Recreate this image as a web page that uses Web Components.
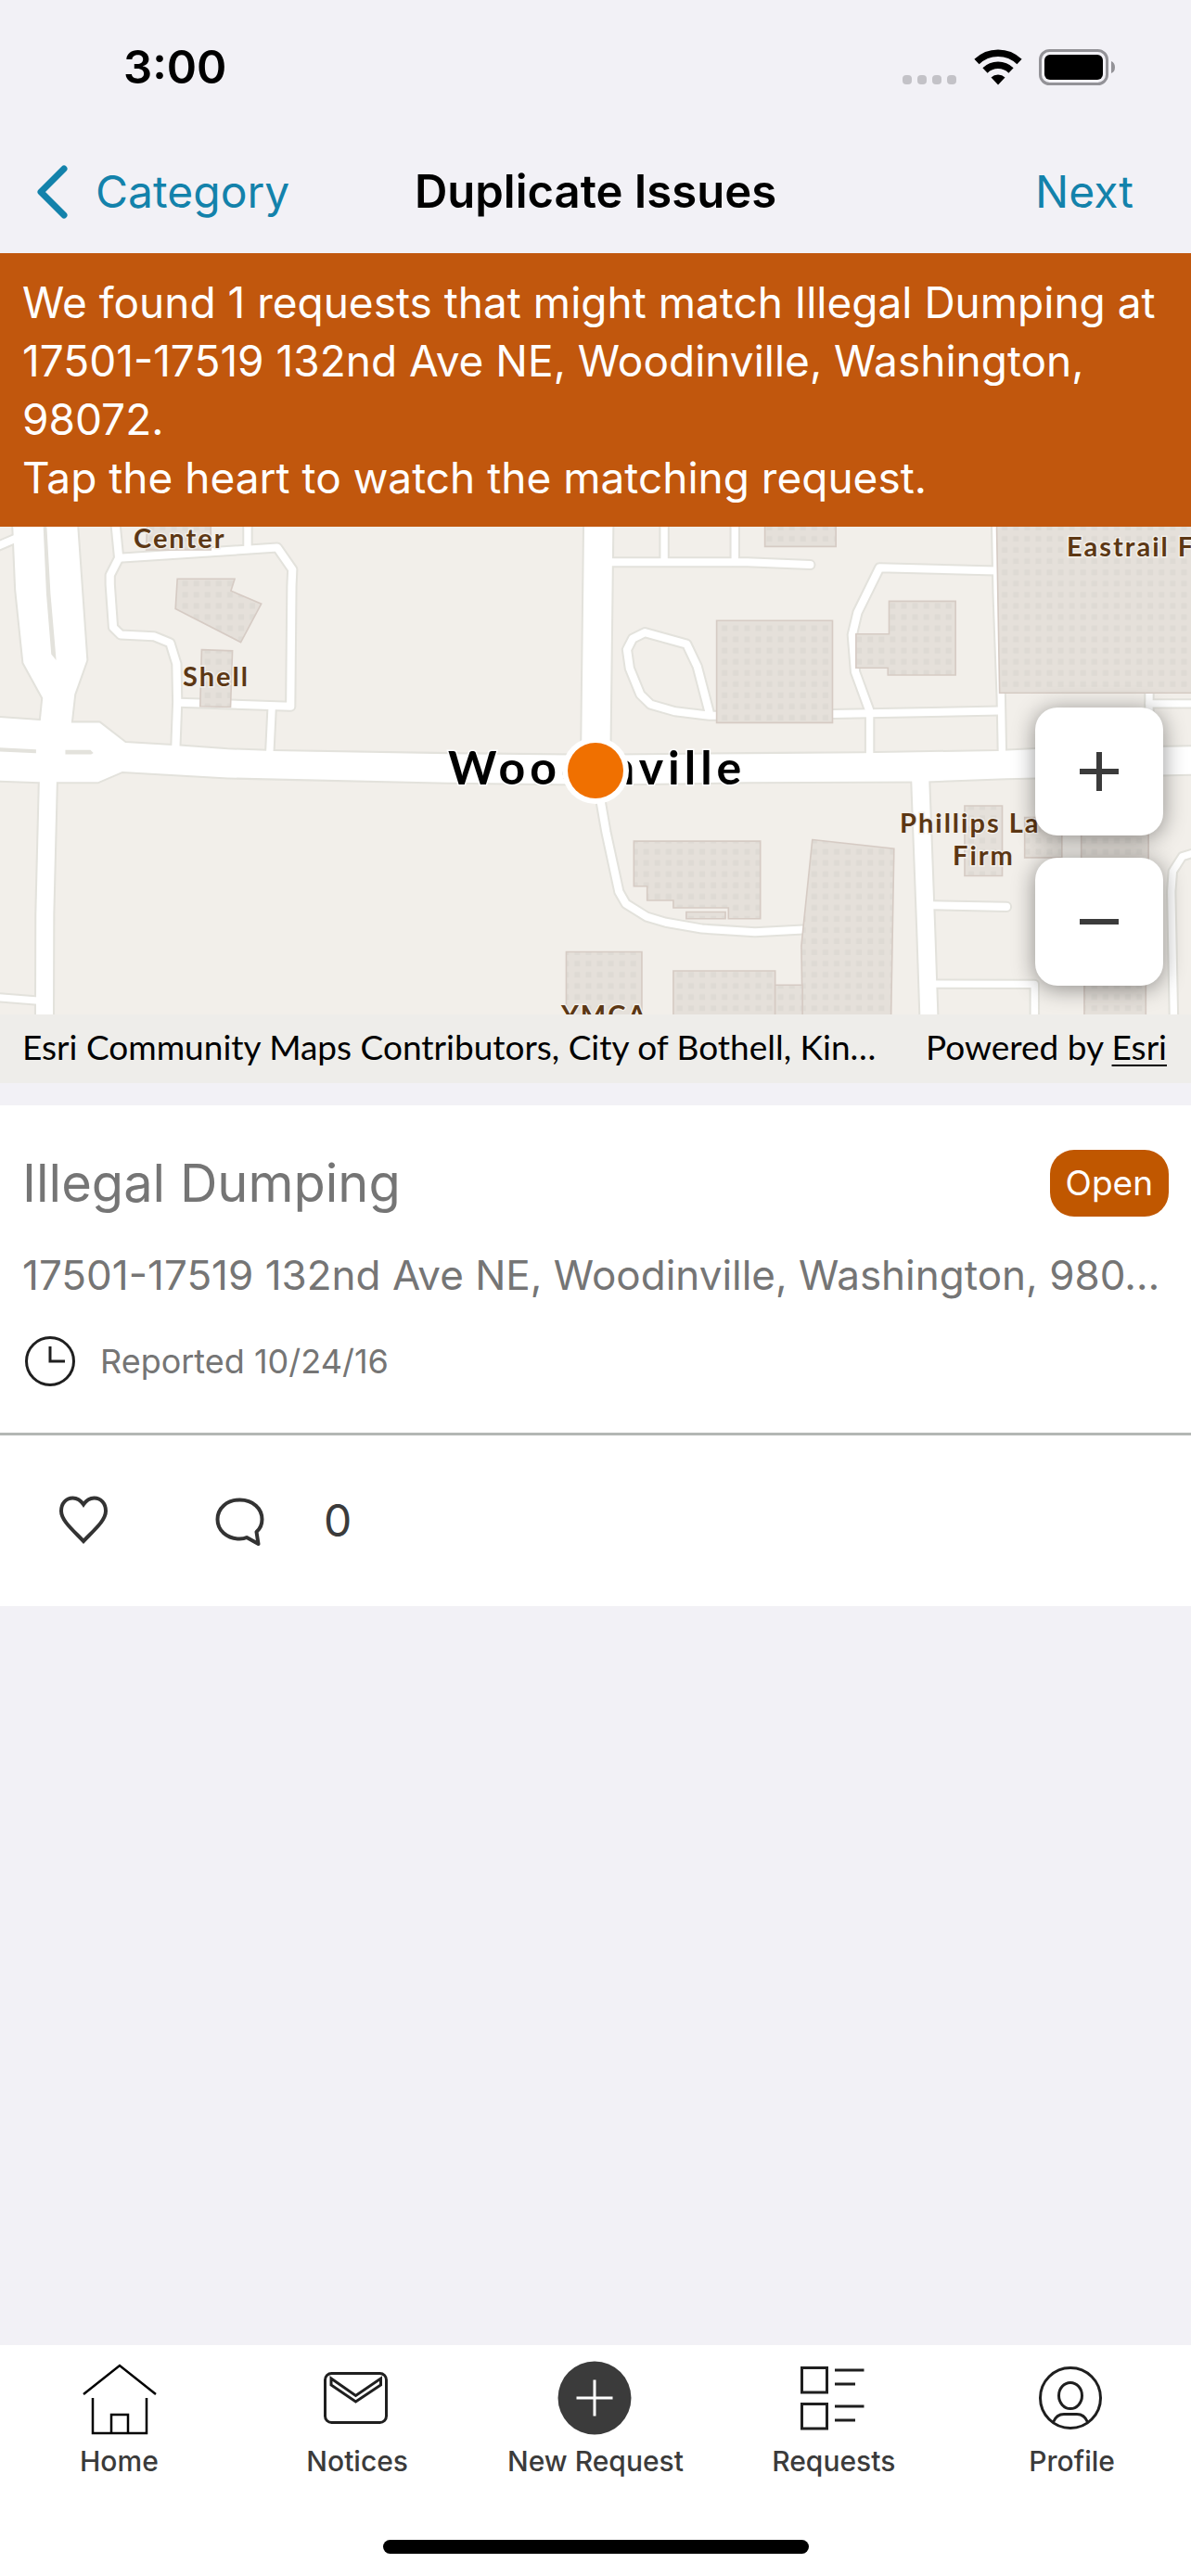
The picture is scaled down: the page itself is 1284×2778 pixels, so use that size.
<!DOCTYPE html>
<html lang="en">
<head>
<meta charset="utf-8">
<meta name="viewport" content="width=device-width, initial-scale=1">
<title>Duplicate Issues</title>
<style>
  html, body { margin: 0; height: 100%; background: #f2f1f6; }
  body { font-family: Inter, "Liberation Sans", sans-serif; color: #3b3b3b; }
</style>
</head>
<body>
<issues-app></issues-app>
<script>
const define = (name, html) => {
  const tpl = document.createElement('template');
  tpl.innerHTML = html;
  customElements.define(name, class extends HTMLElement {
    constructor() {
      super();
      this.attachShadow({ mode: 'open' }).append(tpl.content.cloneNode(true));
    }
  });
};

define('status-bar', `
<style>
  :host { display: flex; justify-content: space-between; align-items: center; height: 146px; padding: 0 80px 0 133px; color: #000; }
  time { font-size: 49px; line-height: 60px; font-weight: 600; }
  svg { display: block; width: 232px; height: 40px; }
</style>
<time>3:00</time>
<svg viewBox="0 0 232 40" aria-hidden="true">
  <g fill="#c3c2c7"><rect x="1" y="28" width="10" height="10" rx="4"/><rect x="17" y="28" width="10" height="10" rx="4"/><rect x="33" y="28" width="10" height="10" rx="4"/><rect x="49" y="28" width="10" height="10" rx="4"/></g>
  <g fill="none" stroke="#000" stroke-width="7.5"><path d="M81 13.5a33 33 0 0 1 46 0"/><path d="M90 23a20 20 0 0 1 28 0"/></g>
  <path d="M96.500 30.500a11 11 0 0 1 15 0L104 38.500z"/>
  <rect x="149.500" y="1.500" width="72" height="36" rx="10" fill="none" stroke="#939297" stroke-width="3"/>
  <rect x="154" y="6" width="63" height="27" rx="6"/>
  <path d="M226 13q4 1.500 4 6.500t-4 6.500z" fill="#939297"/>
</svg>`);

define('nav-bar', `
<style>
  :host { display: grid; grid-template-columns: 1fr auto 1fr; align-items: center; height: 127px; padding: 0 36px 5px; box-sizing: border-box; font-size: 48px; line-height: 60px; }
  button { font: inherit; color: #1382ab; background: none; border: 0; padding: 0; display: flex; align-items: center; gap: 30px; justify-self: start; }
  .next { justify-self: end; padding-right: 26px; }
  h1 { margin: 0; font-size: 49px; line-height: 60px; font-weight: 600; color: #000; }
  svg { display: block; width: 37px; height: 60px; }
</style>
<button class="back" type="button"><svg viewBox="0 0 37 60" aria-hidden="true"><path d="M33 5 8 30l25 25" fill="none" stroke="#1382ab" stroke-width="7" stroke-linecap="round" stroke-linejoin="round"/></svg><slot name="back"></slot></button>
<h1><slot></slot></h1>
<button class="next" type="button"><slot name="next"></slot></button>`);

define('match-banner', `
<style>
  :host { display: block; background: #c1570d; color: #fff; padding: 22px 24px 21px; font-size: 46px; line-height: 63px; }
  ::slotted(p) { margin: 0; }
</style>
<slot></slot>`);

// Basemap geometry. Two tiles side by side, each 1568 units across.
const T = 1568;
const mapRoads = [
  // [tile offset, width, path]
  [0, 20, 'M-10 74 40 52'],
  [0, 20, 'M303 0 313 104 290 150V175L298 290 318 310 405 314 448 332 465 388 467 490 462 625'],
  [0, 20, 'M313 104 730 76 770 135 768 180 765 502 470 492'],
  [0, 18, 'M652 0V76'],
  [0, 18, 'M716 505 710 630'],
  [0, 44, 'M127 690 118 1060 117 1400'],
  [0, 18, 'M-10 1283 100 1292'],
  [0, 74, 'M1576 0 1568 680'],
  [T, 20, 'M0 115H400L565 122'],
  [T, 18, 'M181 0V112'],
  [T, 18, 'M367 0V112'],
  [T, 20, 'M1055 138 748 130 690 250 676 310 684 410 720 510'],
  [T, 18, 'M1054 0 1058 200 1068 480 1071 640'],
  [T, 20, 'M300 520 268 395 240 335 130 304 98 320 83 350 90 400 118 470 145 497 210 516 300 527H400L720 521 1065 514'],
  [T, 18, 'M722 515V640'],
  [T, 44, 'M855 690 870 1100 880 1400'],
  [T, 20, 'M880 1036 1082 1040'],
  [T, 18, 'M890 1247 1156 1248V1400'],
  [T, 20, 'M4 700 28 840 62 1000 80 1032 135 1067 185 1082 280 1099 420 1108 570 1100'],
  [T, 18, 'M1458 460V640'],
  [T, 18, 'M1458 495H1600'],
  [T, 18, 'M1600 888 1545 905 1520 945 1516 1000 1524 1400'],
];
const mapAreas = [
  'M34 0 42 190 62 385 113 480 105 560H186L196 470 228 378 202 0Z',
  'M-10 532 105 540 186 546 262 546 330 600 465 608 600 618 720 622 1180 630 1568 634 1970 630 2270 628 2628 622 2728 617 3160 610V683L2648 695 2440 703 1968 705 1568 711 1180 706 600 693 322 677 258 705H103L-10 701Z',
];
const mapBuildings = [
  [0, 'M388 0H555V82H385Z'],
  [0, 'M467 160H618L608 192 688 227 634 330 462 240Z'],
  [0, 'M531 350 612 353 607 504 527 502Z'],
  [0, 'M1491 1161H1690V1400H1491Z'],
  [T, 'M446 0H633V73H446Z'],
  [T, 'M319 272H624V546H319Z'],
  [T, 'M773 220H948V418H770V399H686V308H773Z'],
  [T, 'M1056 0H1600V466H1064Z'],
  [T, 'M101 864H434V1072H350V1043H205V1023H136V985H101Z'],
  [T, 'M239 1054H342V1072H239Z'],
  [T, 'M571 860 786 884 777 1400H546L542 1145Z'],
  [T, 'M205 1212H473V1400H205Z'],
  [T, 'M473 1250H545V1400H473Z'],
  [T, 'M972 769H1071V957H972Z'],
  [T, 'M1130 800H1228V908H1130Z'],
  [T, 'M1279 800H1456V960H1279Z'],
  [T, 'M1287 1200H1449V1400H1287Z'],
];
const stroke = (extra, colour) => mapRoads.map(([x, w, d]) =>
  `<path transform="translate(${x})" d="${d}" stroke="${colour}" stroke-width="${w + extra}"/>`).join('');

define('zoom-control', `
<style>
  :host { display: flex; flex-direction: column; gap: 24px; }
  button { width: 138px; height: 138px; padding: 0; border: 0; border-radius: 24px; background: #fff; box-shadow: 0 3px 24px rgba(0,0,0,.42); display: grid; place-items: center; }
  svg { display: block; width: 42px; height: 42px; }
</style>
<button type="button" aria-label="Zoom in"><svg viewBox="0 0 42 42"><path d="M0 21H42M21 0V42" stroke="#3b3b3b" stroke-width="6"/></svg></button>
<button type="button" aria-label="Zoom out"><svg viewBox="0 0 42 42"><path d="M0 21H42" stroke="#3b3b3b" stroke-width="6"/></svg></button>`);

define('issue-map', `
<style>
  :host { display: grid; grid-template-rows: 526px 74px; position: relative; overflow: hidden; background: #f2efea; }
  .canvas { display: block; width: 100%; height: 526px; }
  .label { font-family: Lato, "Open Sans", sans-serif; font-weight: 700; font-size: 29px; letter-spacing: 2px; fill: #5c3714; stroke: #f2efea; stroke-width: 3px; paint-order: stroke; }
  .city { font-size: 50px; letter-spacing: 5px; fill: #000; stroke: #fff; }
  zoom-control { position: absolute; right: 30px; top: 195px; }
  footer { display: flex; justify-content: space-between; align-items: center; padding: 0 26px 4px 24px; background: #eeedea; color: #000; font-family: Lato, "Open Sans", sans-serif; font-size: 37px; line-height: 44px; white-space: nowrap; position: relative; }
  a { color: inherit; text-decoration-thickness: 2px; text-underline-offset: 5px; }
</style>
<svg class="canvas" viewBox="0 0 1284 526" preserveAspectRatio="xMidYMin slice" role="img" aria-label="Map">
  <defs><pattern id="dots" width="29.500" height="30" patternUnits="userSpaceOnUse"><rect x="8" y="15" width="15" height="15" fill="#dedad4"/></pattern></defs>
  <g transform="translate(0 -8) scale(.40944 .40179)">
    <rect x="0" y="0" width="3136" height="1400" fill="#f2efea"/>
    <g fill="none" stroke-linejoin="round" stroke-linecap="round">
      ${stroke(10, '#e3e2dc')}
      ${mapAreas.map(d => `<path d="${d}" stroke="#e3e2dc" stroke-width="10"/>`).join('')}
      ${mapAreas.map(d => `<path d="${d}" fill="#fff"/>`).join('')}
      ${stroke(0, '#fff')}
    </g>
    <g fill="#e3e2dc"><path d="M113 0H122L133 200 144 330 148 378 135 362 122 200Z"/><path d="M-10 612 95 618V628L-10 623Z"/><path d="M172 619H238L246 627 240 631H172Z"/></g>
    ${mapBuildings.map(([x, d]) => `<g transform="translate(${x})"><path d="${d}" fill="#e5e0da"/><path d="${d}" fill="url(#dots)" stroke="#d6cbc4" stroke-width="4"/></g>`).join('')}
  </g>
  <text class="label" x="144" y="23">Center</text>
  <text class="label" x="197" y="172">Shell</text>
  <text class="label" x="1150" y="32">Eastrail F</text>
  <text class="label" x="970" y="330">Phillips La</text>
  <text class="label" x="1027" y="365">Firm</text>
  <text class="label" x="605" y="537">YMCA</text>
  <text class="label city" x="483" y="278">Woodinville</text>
  <circle cx="642" cy="263" r="36" fill="#fff"/><circle cx="642" cy="263" r="30" fill="#f07000"/>
</svg>
<footer><span>Esri Community Maps Contributors, City of Bothell, Kin…</span><span>Powered by <a href="#esri">Esri</a></span></footer>
<zoom-control></zoom-control>`);

define('issue-card', `
<style>
  :host { display: block; background: #fff; margin-top: 24px; color: #757575; }
  .info { display: flex; flex-direction: column; padding: 48px 24px 47px; gap: 23px; border-bottom: 3px solid #b3b7b4; }
  .head { display: flex; justify-content: space-between; align-items: center; height: 72px; }
  h2 { margin: 0; font-size: 56px; line-height: 72px; font-weight: 400; }
  .badge { background: #c05700; color: #fff; font-size: 37px; line-height: 72px; border-radius: 26px; padding: 0 17px; }
  p { margin: 0; font-size: 44px; line-height: 80px; white-space: nowrap; }
  .meta { display: flex; align-items: center; gap: 24px; font-size: 36px; line-height: 54px; }
  .clock { width: 60px; height: 60px; }
  .actions { display: flex; align-items: center; height: 184px; padding: 0 62px; gap: 112px; }
  button { display: flex; align-items: center; gap: 63px; padding: 0; border: 0; background: none; color: #3b3b3b; font: inherit; font-size: 48px; line-height: 60px; }
  svg { display: block; width: 56px; height: 56px; }
</style>
<div class="info">
  <div class="head"><h2><slot name="title"></slot></h2><span class="badge"><slot name="status"></slot></span></div>
  <p><slot name="address"></slot></p>
  <div class="meta"><svg class="clock" viewBox="0 0 60 60" aria-hidden="true"><g fill="none" stroke="#1f1f1f" stroke-width="3"><circle cx="30" cy="30" r="25.500"/><path d="M30 14V30H46"/></g></svg><span><slot name="date"></slot></span></div>
</div>
<div class="actions">
  <button type="button" aria-label="Watch"><svg viewBox="0 0 56 56"><path d="M28 10.500C25 6 21 3.500 16.500 3.500 9 3.500 4 9.500 4 17.500c0 10 12 20 24 32.500C40 37.500 52 27.500 52 17.500 52 9.500 47 3.500 39.500 3.500 35 3.500 31 6 28 10.500Z" fill="none" stroke="#333" stroke-width="4"/></svg></button>
  <button type="button" aria-label="Comments"><svg viewBox="0 0 56 56"><path d="M36 46C34 47 31 47.500 28.500 47.500 14 47.500 4.500 38 4.500 26.500S14 5.500 28.500 5.500 52.500 15 52.500 26.500C52.500 32 50 37 46.500 40L48.500 53Z" fill="none" stroke="#333" stroke-width="4" stroke-linejoin="round"/></svg><span><slot name="count"></slot></span></button>
</div>`);

const icons = {
  home: '<g fill="none" stroke="#000" stroke-width="2.500"><path d="M2 35 41 4 80 35"/><path d="M12 39V77H70V39"/><path d="M32 77V57H50V77"/></g>',
  mail: '<g fill="none" stroke="#1f1f1f" stroke-width="3"><rect x="5.500" y="12.500" width="66" height="53" rx="7"/><path d="M12 18 38.500 36.500 65.500 18V25L38.500 43 12 25Z"/></g>',
  add: '<circle cx="39" cy="39" r="39.500" fill="#3b3b3b"/><path d="M19.500 39H58.500M39 19.500V58.500" stroke="#fff" stroke-width="3"/>',
  list: '<g fill="none" stroke="#1f1f1f" stroke-width="3"><path d="M5.500 6.500H32.500V33H5.500Z M5.500 45.500H32.500V72H5.500Z M41 9H72.500 M41 24H63 M41 48H72.500 M41 63H63"/></g>',
  user: '<g fill="none" stroke="#1f1f1f" stroke-width="3"><circle cx="38" cy="39" r="32.500"/><ellipse cx="38" cy="36.500" rx="12.500" ry="14"/><path d="M19.500 65C22 59 26 56.500 31 56.500H45C50 56.500 54 59 56.500 65"/></g>',
};

define('tab-item', `
<style>
  :host { display: block; flex: 1 1 0; }
  a { display: flex; flex-direction: column; align-items: center; color: #3b3b3b; text-decoration: none; font-size: 30px; line-height: 38px; font-weight: 500; gap: 8px; }
  svg { display: block; width: 80px; height: 80px; overflow: visible; }
</style>
<a href="#"><svg viewBox="0 0 80 80" aria-hidden="true"></svg><span><slot></slot></span></a>`);
customElements.define('tab-bar', class extends HTMLElement {
  constructor() {
    super();
    const tabs = [['home', 'Home'], ['mail', 'Notices'], ['add', 'New Request'], ['list', 'Requests'], ['user', 'Profile']];
    this.attachShadow({ mode: 'open' }).innerHTML = `
<style>
  :host { display: flex; flex-direction: column; justify-content: space-between; align-items: center; height: 249px; box-sizing: border-box; padding: 18px 0 24px; background: #fff; }
  nav { display: flex; width: 100%; }
  .indicator { width: 459px; height: 15px; border-radius: 8px; background: #000; }
</style>
<nav>${tabs.map(([icon, text]) => `<tab-item data-icon="${icon}">${text}</tab-item>`).join('')}</nav>
<div class="indicator"></div>`;
    for (const item of this.shadowRoot.querySelectorAll('tab-item'))
      item.shadowRoot.querySelector('svg').innerHTML = icons[item.dataset.icon];
  }
});

define('issues-app', `
<style>
  :host { display: flex; flex-direction: column; min-height: 100vh; }
  main { flex: 1; }
</style>
<header>
  <status-bar></status-bar>
  <nav-bar><span slot="back">Category</span>Duplicate Issues<span slot="next">Next</span></nav-bar>
</header>
<main>
  <match-banner>
    <p>We found 1 requests that might match Illegal Dumping at 17501-17519 132nd Ave NE, Woodinville, Washington, 98072.</p>
    <p>Tap the heart to watch the matching request.</p>
  </match-banner>
  <issue-map></issue-map>
  <issue-card>
    <span slot="title">Illegal Dumping</span>
    <span slot="status">Open</span>
    <span slot="address">17501-17519 132nd Ave NE, Woodinville, Washington, 980…</span>
    <span slot="date">Reported 10/24/16</span>
    <span slot="count">0</span>
  </issue-card>
</main>
<tab-bar></tab-bar>`);
</script>
</body>
</html>
